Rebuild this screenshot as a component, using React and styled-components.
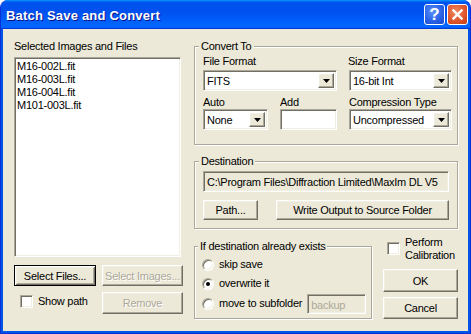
import React from 'react';
import styled, { createGlobalStyle, css } from 'styled-components';

const Face = '#ECE9D8';
const Shadow = '#ACA899';
const DarkShadow = '#716F64';
const Light = '#F1EFE2';
const Disabled = '#ACA899';

const GlobalStyle = createGlobalStyle`
  html, body {
    margin: 0;
    background: #ffffff;
  }
  body {
    font-family: "Liberation Sans", Arial, sans-serif;
    font-size: 11px;
    letter-spacing: -0.25px;
    color: #000;
  }
`;

const sunken = css`
  box-sizing: border-box;
  border: 1px solid;
  border-color: ${Shadow} #fff #fff ${Shadow};
  box-shadow: inset 1px 1px 0 ${DarkShadow}, inset -1px -1px 0 ${Light};
`;

const raised = css`
  box-sizing: border-box;
  border: 1px solid;
  border-color: #fff ${DarkShadow} ${DarkShadow} #fff;
  box-shadow: inset -1px -1px 0 ${Shadow}, inset 1px 1px 0 ${Light};
`;

const Window = styled.div`
  width: 471px;
  height: 334px;
  box-sizing: border-box;
  display: flex;
  flex-direction: column;
  background: #0055e5;
  border: 1px solid #0831d9;
  border-top: none;
  border-radius: 8px 8px 0 0;
  overflow: hidden;
`;

const TitleBar = styled.div`
  height: 29px;
  flex-shrink: 0;
  display: flex;
  align-items: center;
  padding: 0 3px 0 6px;
  margin: 0 -1px;
  background: linear-gradient(
    180deg,
    #0997ff,
    #0053ee 8%,
    #0050ee 40%,
    #0066ff 88%,
    #0066ff 93%,
    #005bff 95%,
    #003dd7 96%,
    #003dd7
  );
`;

const Title = styled.div`
  flex: 1;
  color: #fff;
  font-weight: bold;
  font-size: 13px;
  letter-spacing: 0.2px;
  text-shadow: 1px 1px 0 #0f1089;
  padding-top: 1px;
`;

const CaptionButton = styled.div`
  width: 21px;
  height: 21px;
  box-sizing: border-box;
  margin-left: 2px;
  border: 1px solid #fff;
  border-radius: 3px;
  display: flex;
  align-items: center;
  justify-content: center;
  color: #fff;
  font-weight: bold;
  font-size: 17px;
  letter-spacing: 0;
  background: ${p =>
    p.$close
      ? 'radial-gradient(circle at 40% 35%, #f08a5e, #e0572f 55%, #c23c14)'
      : 'radial-gradient(circle at 40% 35%, #5b8ff7, #2a63e8 55%, #1a48c8)'};
`;

const Client = styled.div`
  flex: 1;
  margin: 0 2px 2px;
  background: ${Face};
  display: flex;
  gap: 11px;
  padding: 11px 10px 0 11px;
`;

const LeftColumn = styled.div`
  width: 169px;
  display: flex;
  flex-direction: column;
`;

const Label = styled.div`
  line-height: 13px;
  white-space: nowrap;
  color: ${p => (p.$disabled ? Disabled : '#000')};
`;

const ListBox = styled.div`
  ${sunken};
  width: 167px;
  height: 200px;
  margin-top: 4px;
  background: #fff;
  padding: 2px 2px;
`;

const ListItem = styled.div`
  line-height: 13px;
`;

const ButtonRow = styled.div`
  display: flex;
  align-items: center;
  gap: ${p => p.$gap || 6}px;
  margin-top: ${p => p.$top || 0}px;
`;

const Button = styled.div`
  ${raised};
  width: ${p => p.$w}px;
  height: ${p => p.$h || 21}px;
  background: ${Face};
  display: flex;
  align-items: center;
  justify-content: center;
  white-space: nowrap;
  flex-shrink: 0;
  color: ${p => (p.$disabled ? Disabled : '#000')};
  text-shadow: ${p => (p.$disabled ? '1px 1px 0 #fff' : 'none')};
  ${p =>
    p.$default &&
    css`
      border: 1px solid #000;
      box-shadow: inset 1px 1px 0 #fff, inset -1px -1px 0 ${DarkShadow},
        inset 2px 2px 0 ${Light}, inset -2px -2px 0 ${Shadow};
    `}
`;

const CheckRow = styled.div`
  display: flex;
  align-items: ${p => (p.$top ? 'flex-start' : 'center')};
  gap: 5px;
  width: ${p => p.$w || 'auto'};
  padding-left: ${p => p.$indent || 0}px;
  margin-top: ${p => p.$lift || 0}px;
`;

const CheckBox = styled.div`
  ${sunken};
  width: 13px;
  height: 13px;
  flex-shrink: 0;
  background: #fff;
  margin-top: ${p => p.$mt || 0}px;
`;

const RightColumn = styled.div`
  width: 264px;
  display: flex;
  flex-direction: column;
`;

const GroupBox = styled.fieldset`
  margin: ${p => p.$mt || 0}px 0 0 0;
  padding: ${p => p.$pad};
  min-width: 0;
  width: ${p => p.$w || 'auto'};
  box-sizing: border-box;
  border: 1px solid ${Shadow};
  box-shadow: inset 1px 1px 0 #fff, 1px 1px 0 #fff;
`;

const Legend = styled.legend`
  padding: 0 2px;
  margin-left: -4px;
  line-height: 13px;
  background: ${Face};
`;

const ConvertGrid = styled.div`
  display: grid;
  grid-template-columns: 65px 57px 103px;
  column-gap: 12px;
  align-items: start;
`;

const Cell = styled.div`
  grid-column: ${p => p.$col};
  grid-row: ${p => p.$row};
  margin-left: ${p => p.$ml || 0}px;
  margin-top: ${p => p.$mt || 0}px;
  line-height: 13px;
`;

const Combo = styled.div`
  ${sunken};
  height: 21px;
  background: #fff;
  display: flex;
  align-items: stretch;
  padding: 2px;
`;

const ComboText = styled.div`
  flex: 1;
  line-height: 17px;
  padding-left: 1px;
  white-space: nowrap;
  overflow: hidden;
`;

const DropButton = styled.div`
  ${raised};
  width: 16px;
  background: ${Face};
  display: flex;
  align-items: center;
  justify-content: center;
`;

const TextField = styled.div`
  ${sunken};
  height: ${p => p.$h || 21}px;
  width: ${p => (p.$w ? `${p.$w}px` : 'auto')};
  background: ${p => (p.$face ? Face : '#fff')};
  color: ${p => (p.$disabled ? Disabled : '#000')};
  line-height: ${p => (p.$h || 21) - 4}px;
  padding: 2px 3px;
  white-space: nowrap;
  overflow: hidden;
  flex-shrink: 0;
`;

const BottomRow = styled.div`
  display: flex;
  margin-top: 7px;
  gap: 11px;
`;

const RadioRow = styled.div`
  display: flex;
  align-items: center;
  gap: 5px;
  height: ${p => p.$h || 19}px;
`;

const Radio = styled.div`
  ${sunken};
  width: 12px;
  height: 12px;
  border-radius: 50%;
  background: #fff;
  display: flex;
  align-items: center;
  justify-content: center;
  flex-shrink: 0;
`;

const RadioDot = styled.div`
  width: 4px;
  height: 4px;
  border-radius: 50%;
  background: #000;
`;

const SideColumn = styled.div`
  width: 75px;
  display: flex;
  flex-direction: column;
`;

const Arrow = () => (
  <svg width="7" height="4" viewBox="0 0 7 4">
    <polygon points="0,0 7,0 3.5,4" fill="#000" />
  </svg>
);

const Select = ({ value }) => (
  <Combo>
    <ComboText>{value}</ComboText>
    <DropButton>
      <Arrow />
    </DropButton>
  </Combo>
);

export default function App() {
  return (
    <>
      <GlobalStyle />
      <Window>
        <TitleBar>
          <Title>Batch Save and Convert</Title>
          <CaptionButton>?</CaptionButton>
          <CaptionButton $close>
            <svg width="11" height="11" viewBox="0 0 11 11">
              <path d="M1.5 1.5 L9.5 9.5 M9.5 1.5 L1.5 9.5" stroke="#fff" strokeWidth="2.4" strokeLinecap="square" />
            </svg>
          </CaptionButton>
        </TitleBar>
        <Client>
          <LeftColumn>
            <Label>Selected Images and Files</Label>
            <ListBox>
              <ListItem>M16-002L.fit</ListItem>
              <ListItem>M16-003L.fit</ListItem>
              <ListItem>M16-004L.fit</ListItem>
              <ListItem>M101-003L.fit</ListItem>
            </ListBox>
            <ButtonRow $top={8}>
              <Button $w={82} $default>Select Files...</Button>
              <Button $w={81} $disabled>Select Images...</Button>
            </ButtonRow>
            <ButtonRow $top={6} $gap={0}>
              <CheckRow $w="88px" $indent={6} $lift={-3}>
                <CheckBox />
                <Label>Show path</Label>
              </CheckRow>
              <Button $w={81} $h={22} $disabled>Remove</Button>
            </ButtonRow>
          </LeftColumn>
          <RightColumn>
            <GroupBox $w="264px" $pad="2px 8px 14px 8px">
              <Legend>Convert To</Legend>
              <ConvertGrid>
                <Cell $col="1 / 3" $row="1">File Format</Cell>
                <Cell $col="3" $row="1" $ml={-1}>Size Format</Cell>
                <Cell $col="1 / 3" $row="2" $mt={2}>
                  <Select value="FITS" />
                </Cell>
                <Cell $col="3" $row="2" $mt={2}>
                  <Select value="16-bit Int" />
                </Cell>
                <Cell $col="1" $row="3" $mt={5}>Auto</Cell>
                <Cell $col="2" $row="3" $mt={5}>Add</Cell>
                <Cell $col="3" $row="3" $mt={5}>Compression Type</Cell>
                <Cell $col="1" $row="4">
                  <Select value="None" />
                </Cell>
                <Cell $col="2" $row="4">
                  <TextField />
                </Cell>
                <Cell $col="3" $row="4">
                  <Select value="Uncompressed" />
                </Cell>
              </ConvertGrid>
            </GroupBox>
            <GroupBox $w="264px" $mt={10} $pad="3px 8px 8px 8px">
              <Legend>Destination</Legend>
              <TextField $face>C:\Program Files\Diffraction Limited\MaxIm DL V5</TextField>
              <ButtonRow $top={8} $gap={18}>
                <Button $w={55} $h={20}>Path...</Button>
                <Button $w={173} $h={20}>Write Output to Source Folder</Button>
              </ButtonRow>
            </GroupBox>
            <BottomRow>
              <GroupBox $w="178px" $mt={4} $pad="2px 4px 3px 7px">
                <Legend>If destination already exists</Legend>
                <RadioRow>
                  <Radio />
                  <Label>skip save</Label>
                </RadioRow>
                <RadioRow>
                  <Radio>
                    <RadioDot />
                  </Radio>
                  <Label>overwrite it</Label>
                </RadioRow>
                <RadioRow $h={21}>
                  <Radio />
                  <Label>move to subfolder</Label>
                  <TextField $face $disabled $w={59} $h={20}>backup</TextField>
                </RadioRow>
              </GroupBox>
              <SideColumn>
                <CheckRow $top $indent={4}>
                  <CheckBox $mt={6} />
                  <Label>
                    Perform
                    <br />
                    Calibration
                  </Label>
                </CheckRow>
                <ButtonRow $top={7}>
                  <Button $w={75} $h={23}>OK</Button>
                </ButtonRow>
                <ButtonRow $top={5}>
                  <Button $w={75} $h={22}>Cancel</Button>
                </ButtonRow>
              </SideColumn>
            </BottomRow>
          </RightColumn>
        </Client>
      </Window>
    </>
  );
}
